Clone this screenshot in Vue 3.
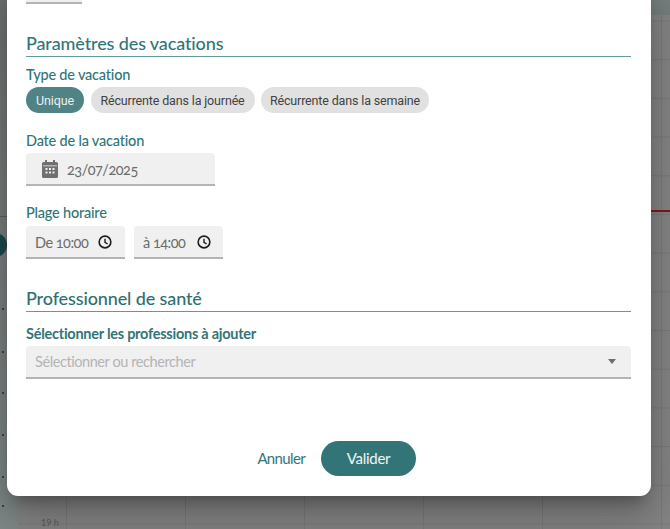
<script setup>
const chips = [
  { label: 'Unique', active: true },
  { label: 'Récurrente dans la journée', active: false },
  { label: 'Récurrente dans la semaine', active: false },
]
const dots = [308, 351, 392, 434, 476, 505]
</script>

<template>
  <div class="page">
    <div class="backdrop">
      <div class="topband"></div>
      <div class="grid"></div>
      <div class="nowline"></div>
      <div class="strip">
        <div class="stripline"></div>
        <div class="fab"></div>
        <i v-for="y in dots" :key="y" class="dot" :style="{ top: y + 'px' }"></i>
      </div>
      <span class="hour">19 h</span>
    </div>

    <section class="modal">
      <div class="stub"></div>

      <h2 class="title first">Paramètres des vacations</h2>

      <div class="label type-label">Type de vacation</div>
      <div class="chips">
        <span v-for="c in chips" :key="c.label" class="chip" :class="{ active: c.active }">{{ c.label }}</span>
      </div>

      <div class="label date-label">Date de la vacation</div>
      <div class="field date">
        <svg class="cal" viewBox="0 0 16 18" width="16" height="18">
          <path fill="#707070" fill-rule="evenodd" d="M3 0h2v2h6V0h2v2h1.500A1.500 1.500 0 0 1 16 3.500v13a1.500 1.500 0 0 1-1.500 1.500h-13A1.500 1.500 0 0 1 0 16.500v-13A1.500 1.500 0 0 1 1.500 2H3V0zM1 5.500v.7h14v-.7H1zM3.500 8v2h2V8h-2zm3.500 0v2h2V8H7zm3.500 0v2h2V8h-2zm-7 3.500v2h2v-2h-2zm3.500 0v2h2v-2H7zm3.500 0v2h2v-2h-2z"/>
        </svg>
        <span class="value">23/07/2025</span>
      </div>

      <div class="label hours-label">Plage horaire</div>
      <div class="times">
        <div class="field time from">
          <span class="value">De 10:00</span>
          <svg class="clock" viewBox="0 0 24 24" width="14" height="14"><circle cx="12" cy="12" r="10" fill="none" stroke="#1d1d1d" stroke-width="2.800"/><path d="M12 6.500V12.500l4.500 3" fill="none" stroke="#1d1d1d" stroke-width="2.400"/></svg>
        </div>
        <div class="field time to">
          <span class="value">à 14:00</span>
          <svg class="clock" viewBox="0 0 24 24" width="14" height="14"><circle cx="12" cy="12" r="10" fill="none" stroke="#1d1d1d" stroke-width="2.800"/><path d="M12 6.500V12.500l4.500 3" fill="none" stroke="#1d1d1d" stroke-width="2.400"/></svg>
        </div>
      </div>

      <h2 class="title second">Professionnel de santé</h2>

      <div class="label prof-label">Sélectionner les professions à ajouter</div>
      <div class="field select">
        <span class="placeholder">Sélectionner ou rechercher</span>
        <svg viewBox="0 0 8 5" width="8" height="5"><path d="M0 0h8L4 5z" fill="#6e6e6e"/></svg>
      </div>

      <div class="actions">
        <span class="cancel">Annuler</span>
        <span class="submit">Valider</span>
      </div>
    </section>
  </div>
</template>

<style>
html, body { margin: 0; background: #858585; }
</style>

<style scoped>
.page {
  position: relative;
  width: 670px;
  height: 529px;
  overflow: hidden;
  font-family: Lato, "Open Sans", sans-serif;
}
.backdrop { position: absolute; inset: 0; background: #868686; }
.topband { position: absolute; left: 0; right: 0; top: 0; height: 15px; background: #78817f; }
.grid {
  position: absolute;
  left: 18px; right: 0; top: 15px; bottom: 0;
  background-image:
    linear-gradient(#7b7b7b 1px, transparent 1px),
    linear-gradient(90deg, #7b7b7b 1px, transparent 1px);
  background-size: 100% 38.700px, 119px 100%;
  background-position: 0 5.500px, 48px 0;
}
.nowline { position: absolute; left: 651px; right: 0; top: 210px; height: 2px; background: #7f1a1a; }
.strip {
  position: absolute; left: 0; top: 0; bottom: 0; width: 18px;
  background: linear-gradient(#6f7473, #7a8080 270px, #808a89);
  overflow: hidden;
}
.stripline { position: absolute; left: 0; right: 0; top: 216px; height: 1px; background: #5c6160; }
.fab { position: absolute; left: -17px; top: 233px; width: 24px; height: 24px; border-radius: 50%; background: #1c4a4c; }
.dot { position: absolute; left: 2px; width: 2px; height: 2px; background: #3d4343; }
.hour { position: absolute; left: 41px; top: 517px; font-size: 9px; color: #5a5a5a; }

.modal {
  position: absolute;
  left: 7px;
  top: -20px;
  width: 644px;
  height: 516px;
  box-sizing: border-box;
  padding: 0 20px 0 19px;
  background: #fff;
  border-radius: 11px;
  box-shadow: 0 11px 15px -7px rgba(0, 0, 0, .3), 0 24px 38px 3px rgba(0, 0, 0, .14), 0 9px 46px 8px rgba(0, 0, 0, .12);
  color: #327578;
}
.stub { width: 56px; height: 24px; box-sizing: border-box; background: #f0f0f0; border-bottom: 2px solid #b5b5b5; }
.title {
  margin: 0;
  box-sizing: content-box;
  height: 24px;
  line-height: 24px;
  font-size: 18px;
  font-weight: 500;
  letter-spacing: -0.12px;
  color: #327578;
  border-bottom: 1px solid #5f9a9c;
  padding-bottom: 1px;
}
.title.first { margin-top: 27px; }
.title.second { margin-top: 27px; color: #2f6f72; }
.label { font-size: 14.500px; font-weight: 500; line-height: 18px; letter-spacing: -0.2px; }
.type-label { margin-top: 9px; }
.date-label { margin-top: 19px; }
.hours-label { margin-top: 18px; }
.prof-label { margin-top: 13px; font-weight: 700; letter-spacing: -0.25px; }
.chips { display: flex; gap: 6.500px; margin-top: 3px; }
.chip {
  display: flex; align-items: center; justify-content: center;
  height: 26px; border-radius: 13px;
  background: #e1e1e1; color: #424242; font-size: 12.500px; letter-spacing: -0.15px;
  font-family: Roboto, Lato, sans-serif;
}
.chip:first-child { width: 58px; }
.chip:nth-child(2) { width: 164px; }
.chip:nth-child(3) { width: 168px; }
.chip.active { background: #4f8385; color: #e9f0f0; }
.field {
  display: flex; align-items: center; box-sizing: border-box;
  height: 33px; background: #f0f0f0;
  border-bottom: 2px solid #b4b4b4; border-radius: 4px 4px 0 0;
}
.label + .field { margin-top: 3px; }
.label + .times { margin-top: 4px; }
.date { width: 189px; padding-left: 16px; gap: 9px; }
.value {
  font-size: 14.500px; color: #6c6c6c; letter-spacing: -0.5px;
  font-variant-numeric: oldstyle-nums;
  font-feature-settings: "onum";
  margin-top: 2px;
}
.times { display: flex; gap: 9px; }
.time { padding-left: 9px; }
.from { width: 99px; gap: 10px; }
.to { width: 89px; gap: 12px; }
.select { justify-content: space-between; padding: 0 15px 0 9px; }
.placeholder { font-size: 14.500px; color: #b4b4b4; letter-spacing: -0.42px; }
.actions { display: flex; justify-content: flex-end; align-items: center; gap: 16px; margin-top: 62px; padding-right: 215px; }
.cancel { font-size: 15px; color: #327578; letter-spacing: -0.65px; margin-bottom: 2px; }
.submit {
  display: flex; align-items: center; justify-content: center;
  width: 95px; height: 35px; border-radius: 18px;
  background: #337577; color: #f1f6f6; font-size: 15px; letter-spacing: -0.3px; padding-bottom: 2px; box-sizing: border-box;
}
</style>
